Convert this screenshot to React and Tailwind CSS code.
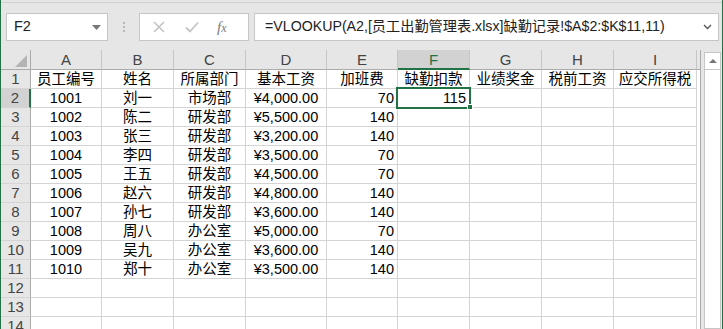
const cols = [
  { key: "A", w: "w-[71px]" },
  { key: "B", w: "w-[72px]" },
  { key: "C", w: "w-[72px]" },
  { key: "D", w: "w-[81px]" },
  { key: "E", w: "w-[71px]" },
  { key: "F", w: "w-[72px]" },
  { key: "G", w: "w-[72px]" },
  { key: "H", w: "w-[72px]" },
  { key: "I", w: "w-[83px]" },
];

const header = ["员工编号", "姓名", "所属部门", "基本工资", "加班费", "缺勤扣款", "业绩奖金", "税前工资", "应交所得税"];

const data = [
  ["1001", "刘一", "市场部", "¥4,000.00", "70", "115"],
  ["1002", "陈二", "研发部", "¥5,500.00", "140"],
  ["1003", "张三", "研发部", "¥3,200.00", "140"],
  ["1004", "李四", "研发部", "¥3,500.00", "70"],
  ["1005", "王五", "研发部", "¥4,500.00", "70"],
  ["1006", "赵六", "研发部", "¥4,800.00", "140"],
  ["1007", "孙七", "研发部", "¥3,600.00", "140"],
  ["1008", "周八", "办公室", "¥5,000.00", "70"],
  ["1009", "吴九", "办公室", "¥3,600.00", "140"],
  ["1010", "郑十", "办公室", "¥3,500.00", "140"],
];

const font = "font-['Liberation_Sans','Noto_Sans_CJK_SC',sans-serif]";

const FormulaBar = () => (
  <div className="h-[50px] bg-[#e6e6e6]">
    <div className="h-[3px] border-b border-[#d0d0d0]" />
    <div className="ml-[5px] mt-[10px] flex h-[28px] items-stretch">
      <div className="flex w-[102px] items-center justify-between border border-[#c6c6c6] bg-white pl-[7px] pr-[6px] text-[14.5px] text-[#222]">
        <span>F2</span>
        <svg width="9" height="5" viewBox="0 0 9 5"><path d="M0 0h9L4.5 5z" fill="#777" /></svg>
      </div>
      <div className="flex w-[31px] flex-col items-center justify-center gap-[2px]">
        <span className="size-[2px] bg-[#b8b8b8]" />
        <span className="size-[2px] bg-[#b8b8b8]" />
        <span className="size-[2px] bg-[#b8b8b8]" />
      </div>
      <div className="flex w-[110px] items-center border border-[#c6c6c6] bg-white">
        <svg className="ml-[13px]" width="12" height="12" viewBox="0 0 12 12">
          <path d="M1 1l10 10M11 1L1 11" stroke="#c4c4c4" strokeWidth="1.6" />
        </svg>
        <svg className="ml-[20px]" width="14" height="12" viewBox="0 0 14 12">
          <path d="M1 6.5l4 4L13 1.5" stroke="#c4c4c4" strokeWidth="1.8" fill="none" />
        </svg>
        <span className="ml-[18px] font-['Liberation_Serif',serif] text-[15px] italic text-[#7a7a7a]">
          f<span className="text-[12px]">x</span>
        </span>
      </div>
      <div className="ml-[5px] flex w-[465px] items-center justify-between border border-[#c6c6c6] bg-white pl-[10px] pr-[6px] text-[14.2px] text-[#222]">
        <span>=VLOOKUP(A2,[员工出勤管理表.xlsx]缺勤记录!$A$2:$K$11,11)</span>
        <svg width="9" height="6" viewBox="0 0 9 6">
          <path d="M1 1l3.5 3.5L8 1" stroke="#555" strokeWidth="1.4" fill="none" />
        </svg>
      </div>
    </div>
  </div>
);

const HeaderRow = () => (
  <div className="flex h-[20px]">
    <div className="relative w-[30px] border-r border-b border-[#ababab] bg-[#e6e6e6]">
      <svg className="absolute right-[3px] bottom-[2px]" width="12" height="12" viewBox="0 0 12 12">
        <path d="M12 0v12H0z" fill="#b4b4b4" />
      </svg>
    </div>
    {cols.map((c) =>
      c.key === "F" ? (
        <div key={c.key} className={`${c.w} flex items-center justify-center border-r border-b-2 border-r-[#c6c6c6] border-b-[#217346] bg-[#d2d2d2] text-[15px] leading-none text-[#217346]`}>
          {c.key}
        </div>
      ) : (
        <div key={c.key} className={`${c.w} flex items-center justify-center border-r border-b border-r-[#c6c6c6] border-b-[#ababab] bg-[#e6e6e6] text-[15px] leading-none text-[#444]`}>
          {c.key}
        </div>
      )
    )}
    <div className="w-[3px] border-b border-[#ababab] bg-[#e6e6e6]" />
  </div>
);

const Row = ({ n, cells }) => {
  const sel = n === 2;
  return (
    <div className="flex h-[19px]">
      <div
        className={`w-[30px] border-b border-b-[#d4d4d4] text-center text-[15px] leading-[18px] text-[#444] ${
          sel ? "border-r-2 border-r-[#217346] bg-[#d2d2d2]" : "border-r border-r-[#ababab] bg-[#e6e6e6]"
        }`}
      >
        {n}
      </div>
      {cols.map((c, i) => {
        const v = cells[i] ?? "";
        const align = n > 1 && (i === 4 || i === 5) ? "text-right pr-[3px]" : "text-center";
        return (
          <div key={c.key} className={`${c.w} ${align} overflow-visible whitespace-nowrap border-r border-b border-[#d4d4d4] bg-white text-[14.5px] leading-[19px] text-black`}>
            {v}
          </div>
        );
      })}
      <div className="w-[3px] bg-white" />
    </div>
  );
};

const Scrollbar = () => (
  <div className="flex h-full">
    <div className="w-px bg-[#ababab]" />
    <div className="w-[3px] bg-[#e6e6e6]" />
    <div className="flex w-[17px] flex-col bg-[#e6e6e6] pt-[2px]">
      <div className="flex flex-1 flex-col border border-[#c6c6c6] bg-white">
        <div className="flex h-[17px] items-center justify-center border-b border-[#c6c6c6]">
          <svg width="8" height="4" viewBox="0 0 8 4"><path d="M0 4h8L4 0z" fill="#777" /></svg>
        </div>
      </div>
    </div>
    <div className="w-px bg-[#e6e6e6]" />
  </div>
);

export default function App() {
  const rows = [header, ...data, [], [], []];
  return (
    <div className={`${font} h-[329px] w-[723px] overflow-hidden border-x border-[#217346] bg-[#e6e6e6]`}>
      <FormulaBar />
      <div className="flex h-[279px]">
        <div className="relative w-[699px] bg-white">
          <HeaderRow />
          {rows.map((r, i) => (
            <Row key={i} n={i + 1} cells={r} />
          ))}
          <div className="absolute left-[395px] top-[37px] h-[22px] w-[75px] border-2 border-[#217346]" />
          <div className="absolute left-[466px] top-[54px] size-[6px] border border-white bg-[#217346]" />
        </div>
        <Scrollbar />
      </div>
    </div>
  );
}
